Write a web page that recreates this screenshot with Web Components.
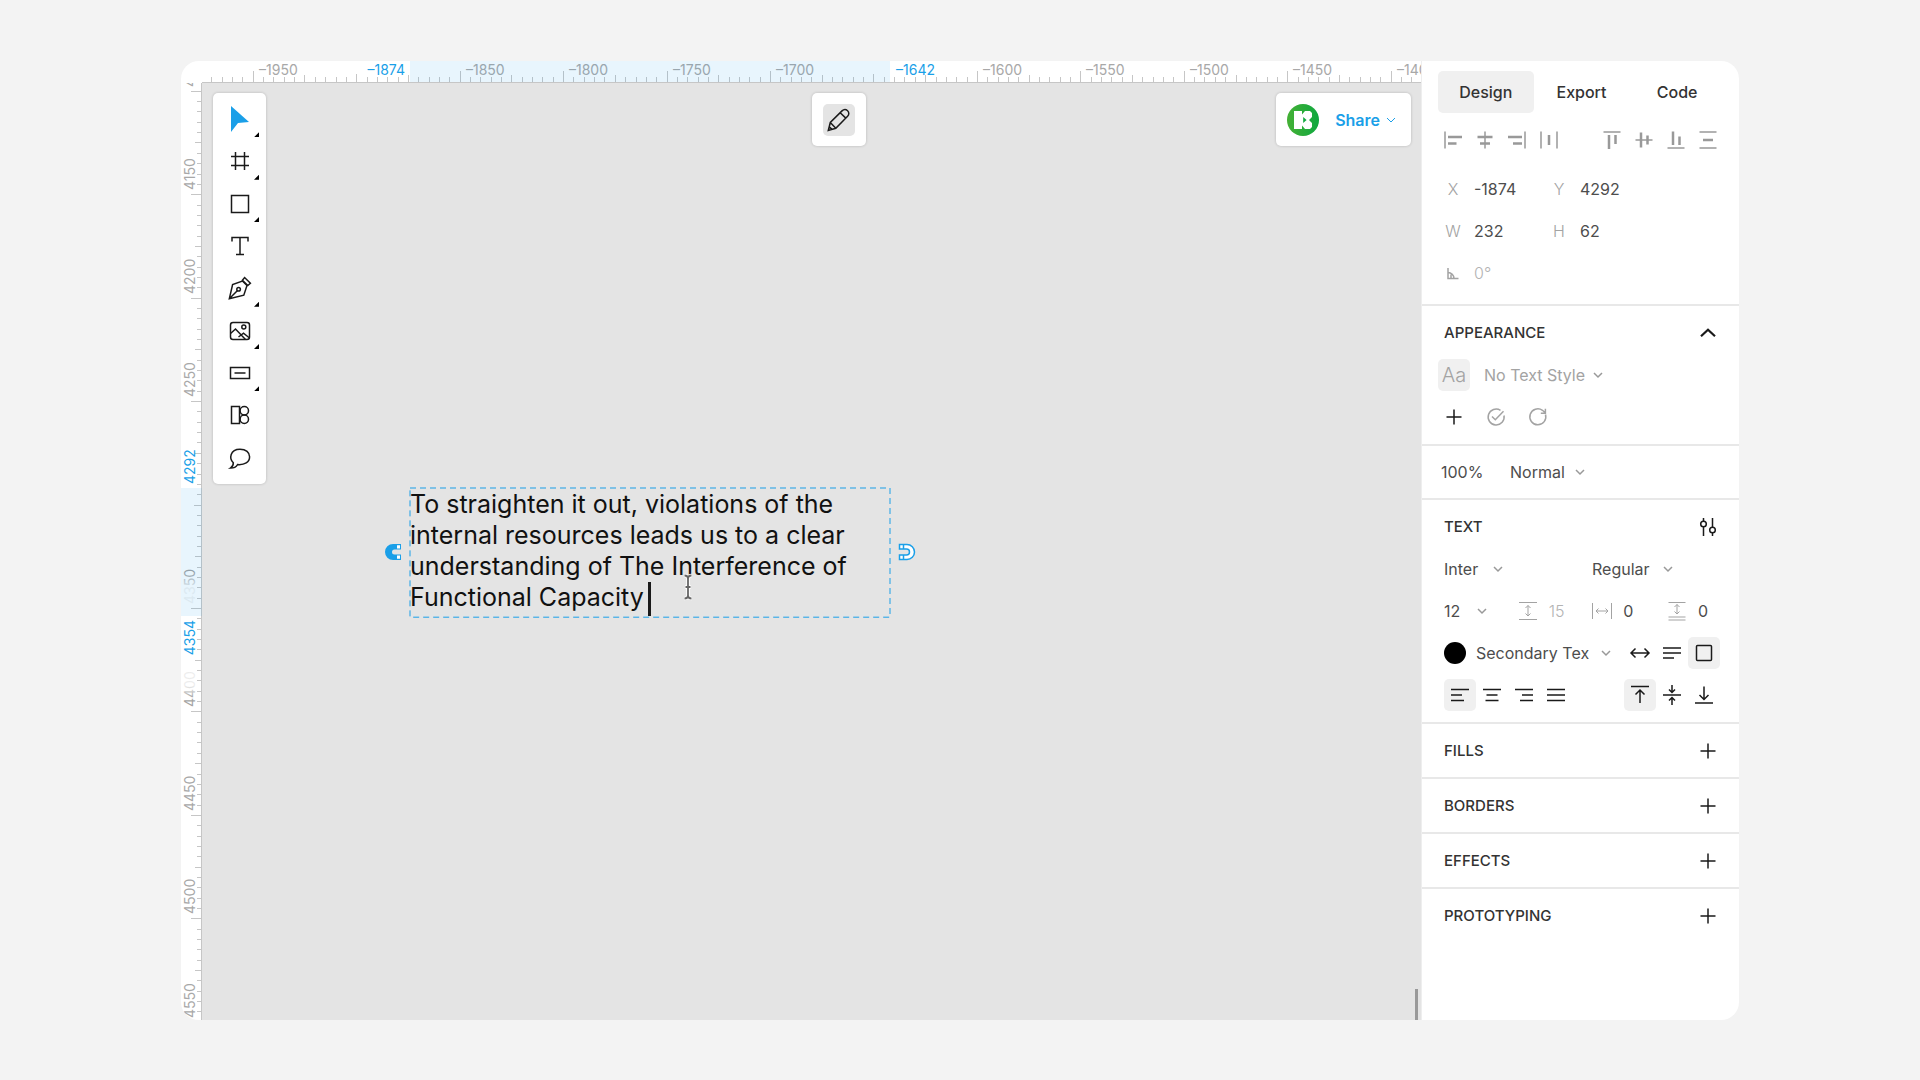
<!DOCTYPE html>
<html lang="en">
<head>
<meta charset="utf-8">
<title>Design editor</title>
<style>
  html, body { margin: 0; height: 100%; }
  body {
    background: #f3f3f3;
    font-family: Inter, "Liberation Sans", sans-serif;
    font-size: 16px;
    color: #4d4d4d;
  }
</style>
</head>
<body>
<editor-app></editor-app>

<script>
const ICONS = {
  cursor: '<path fill="#1a9fe8" stroke="none" d="M7 3 25 19 14 20 7 29Z"/>',
  frame: '<path d="M11.500 7v18M20.500 7v18M7 11.500h18M7 20.500h18"/>',
  square: '<rect x="7.500" y="7.500" width="17" height="17"/>',
  text: '<path d="M8 11.500v-4h16v4M16 7.500v17M12 24.500h8"/>',
  pen: '<path d="M5.300 26.800 8.600 12.600 18.400 9 23 13.400 19.800 23.200ZM5.300 26.800l8.200-8.300"/><circle cx="14.600" cy="17.300" r="1.800"/><path d="M18.400 8.200 20.600 5.500 26.400 11.200 23.800 13.500Z"/>',
  image: '<rect x="6.500" y="7.500" width="19" height="17" rx="2.500"/><circle cx="19.800" cy="12" r="2"/><path d="M6.500 18.500 11.500 14l10 10.500M14.500 22l5-3.800 6 4.800"/>',
  control: '<rect x="6.500" y="10.500" width="19" height="11"/><path d="M10.500 16h11"/>',
  component: '<rect x="7.500" y="7.500" width="8" height="17"/><circle cx="20.300" cy="11.700" r="4.200"/><circle cx="20.300" cy="20.300" r="4.200"/>',
  comment: '<path d="M9.300 20.700C5 16.700 5.800 7.200 16 7.200c6 0 9.600 3.300 9.600 7.600 0 5.500-5 8.300-12 7.800-1.600 2.400-4 3.600-7.200 3.500 2-1.200 3-3.200 2.900-5.400Z"/>',
  pencil: '<path d="M5.300 26.500 7.300 18.500 19 6.900c1.700-1.600 4-1.600 5.600-.2s1.600 3.900 0 5.500L12.800 24.300ZM7.300 18.500l5.500 5.800M17.200 8.800l5.600 5.300M6.300 22.900l2.700 2.500"/>',
  chev: '<path d="M12 14l4 4 4-4"/>',
  up: '<path stroke-width="2.200" d="M9 19.300 16 12.700 23 19.300"/>',
  plus: '<path d="M16 8.500v15M8.500 16h15"/>',
  check: '<path d="M24 14.500a8 8 0 1 1-3.500-5.200M12 15.500l3.300 3.300 8.200-8.600"/>',
  refresh: '<path d="M23.500 13.500a8 8 0 1 1-3-4.200l2.700 2.500M23.400 7.800v4.500h-4.600"/>',
  sliders: '<path d="M11.500 7v3.200M11.500 15.800V25M20.500 7v9.200M20.500 21.800V25"/><circle cx="11.500" cy="13" r="2.800"/><circle cx="20.500" cy="19" r="2.800"/>',
  angle: '<path stroke-width="1.500" d="M11 11v10.500h10.500M11 15.500a6 6 0 0 1 6 6M14 17.500v4"/>',
  alL: '<path d="M8 7.500v17"/><path class="b" d="M11 13h14M11 19.500h8.500"/>',
  alC: '<path d="M16 7.500v17"/><path class="b" d="M8.500 13h15M11 19.500h10"/>',
  alR: '<path d="M24 7.500v17"/><path class="b" d="M7 13h14M12 19.500h9"/>',
  alD: '<path d="M8 7.500v17M24 7.500v17"/><path class="b" d="M16 11v10"/>',
  alT: '<path d="M7.500 8h17"/><path class="b" d="M13 11v14M19.500 11v9"/>',
  alM: '<path d="M7.500 16h17"/><path class="b" d="M13 8.500v15M19.500 11.500v9"/>',
  alB: '<path d="M7.500 24h17"/><path class="b" d="M13 7.500V21M19.500 12.500V21"/>',
  alV: '<path d="M7.500 8h17M7.500 24h17"/><path class="b" d="M11 16h10"/>',
  lineH: '<path d="M7 7.500h18M7 24.500h18M16 10.500v10.500M13.500 13l2.500-2.500 2.500 2.500M13.500 18.500 16 21l2.500-2.500"/>',
  letterS: '<path d="M6.500 8v16M25.500 8v16M10 16h12M12.500 13.500 10 16l2.500 2.500M19.500 13.500 22 16l-2.500 2.500"/>',
  paraS: '<path d="M7.500 7.500h17M7.500 22h17M7.500 25h17M16 9.500v9.500M13.500 12 16 9.500l2.500 2.500M13.500 16.500 16 19l2.500-2.500"/>',
  autoW: '<path d="M7 16h18M11.500 11.500 7 16l4.500 4.500M20.500 11.500 25 16l-4.500 4.500"/>',
  autoH: '<path d="M7 11h18M7 16h18M7 21h11"/>',
  fixed: '<rect x="8.500" y="8.500" width="15" height="15" rx="1"/>',
  txL: '<path d="M7 10.500h18M7 16h11M7 21.500h13"/>',
  txC: '<path d="M7 10.500h18M10.500 16h11M9.500 21.500h13"/>',
  txR: '<path d="M7 10.500h18M14 16h11M12 21.500h13"/>',
  txJ: '<path d="M7 10.500h18M7 16h18M7 21.500h18"/>',
  vT: '<path d="M7 7.500h18M16 24V11.500M11.500 15.500l4.500-4.500 4.500 4.500"/>',
  vM: '<path d="M7 16h18M16 6v7M13 10.500l3 3 3-3M16 26v-7M13 21.500l3-3 3 3"/>',
  vB: '<path d="M7 24h18M16 7.500V20M11.500 16l4.500 4.500L20.500 16"/>',
  magnetOn: '<path fill="#1a9fe8" stroke="none" d="M24 8v5.500h-6.500a2.500 2.500 0 0 0 0 5H24V24h-8a8 8 0 0 1 0-16Z"/><path fill="#fff" stroke="none" d="M20 9.200h3v3.200h-3zM20 19.600h3v3.200h-3z"/>',
  magnetOff: '<path fill="#fff" stroke="#1a9fe8" d="M8.500 8.500h7.500a7.500 7.500 0 0 1 0 15H8.500v-4.500h7a3 3 0 0 0 0-6h-7ZM12.500 8.500v4.500M12.500 19v4.500"/>',
  ibeam: '<path stroke="#fff" stroke-width="3.500" d="M12 4.500q4 0 4 3v17q0 3-4 3M20 4.500q-4 0-4 3M16 24.500q0 3 4 3M13 16h6"/><path stroke="#666" stroke-width="1.800" d="M12.500 4.500q3.500 0 3.500 3v17q0 3-3.500 3M19.500 4.500q-3.500 0-3.500 3M16 24.500q0 3 3.500 3M13.500 16h5"/>',
  logo: '<defs><linearGradient id="g"><stop stop-color="#45b035"/><stop offset="1" stop-color="#0fa83f"/></linearGradient></defs><circle cx="16" cy="16" r="16" fill="url(#g)" stroke="none"/><path fill="#fff" stroke="none" d="M7 7h8v3.500L18 7h5l2 2v4l-3 3 3 3v4l-2 2h-5l-3-3.500V25H7Z"/><path fill="#12a83e" stroke="none" d="M16.200 13v6l3.400-3Z"/>'
};

/* Registers an element; the copy is filled in before it enters the shadow root */
const define = (name, html, setup) => {
  const template = document.createElement('template');
  template.innerHTML = html;
  customElements.define(name, class extends HTMLElement {
    connectedCallback() {
      if (this.shadowRoot) return;
      const root = this.attachShadow({ mode: 'open' });
      const copy = template.content.cloneNode(true);
      if (setup) setup(this, copy);
      root.append(copy);
    }
  });
};

/* An icon drawn on a 32px grid in the current colour */
define('ui-icon', `
  <style>
    :host { display: block; flex: none; width: 32px; height: 32px; }
    svg { display: block; fill: none; stroke: currentColor; stroke-width: var(--stroke, 1.500); }
    .b { stroke-width: 2.500; }
  </style>
  <svg width="32" height="32" viewBox="0 0 32 32" aria-hidden="true"></svg>`,
  (el, root) => { root.querySelector('svg').innerHTML = ICONS[el.getAttribute('name')]; });

define('icon-button', `
  <style>
    :host { display: block; flex: none; color: #1a1a1a; }
    button { display: block; padding: 0; border: 0; border-radius: 5px; background: none; color: inherit; }
    :host([active]) button { background: #f0f0f0; }
  </style>
  <button type="button"><ui-icon></ui-icon></button>`,
  (el, root) => {
    root.querySelector('ui-icon').setAttribute('name', el.getAttribute('name'));
    root.querySelector('button').setAttribute('aria-label', el.getAttribute('label') || el.getAttribute('name'));
  });

define('tool-button', `
  <style>
    :host { display: block; color: #1a1a1a; }
    button { position: relative; display: grid; place-items: center; width: 100%; height: 100%; padding: 0; border: 0; background: none; color: inherit; }
    :host([menu]) button::after {
      content: ""; position: absolute; right: 2px; bottom: 3px; width: 5px; height: 5px;
      background: #000; clip-path: polygon(100% 0, 100% 100%, 0 100%);
    }
  </style>
  <button type="button"><ui-icon></ui-icon></button>`,
  (el, root) => {
    root.querySelector('ui-icon').setAttribute('name', el.getAttribute('name'));
    root.querySelector('button').setAttribute('aria-label', el.getAttribute('name'));
  });

define('tool-bar', `
  <style>
    :host { display: grid; grid-auto-rows: 1fr; box-sizing: border-box; width: 53px; height: 391px; padding: 5px; background: #fff; border-radius: 5px; box-shadow: 0 0 3px #0003; }
  </style>
  <tool-button name="cursor" menu></tool-button>
  <tool-button name="frame" menu></tool-button>
  <tool-button name="square" menu></tool-button>
  <tool-button name="text"></tool-button>
  <tool-button name="pen" menu></tool-button>
  <tool-button name="image" menu></tool-button>
  <tool-button name="control" menu></tool-button>
  <tool-button name="component"></tool-button>
  <tool-button name="comment"></tool-button>`);

define('floating-card', `
  <style>
    :host { display: flex; align-items: center; box-sizing: border-box; height: 53px; padding: 0 11px; background: #fff; border-radius: 5px; box-shadow: 0 0 3px #0003; }
  </style>
  <slot></slot>`);

define('share-menu', `
  <style>
    :host { display: flex; align-items: center; gap: 16px; color: #1a9fe8; }
    button { display: flex; align-items: center; padding: 0; border: 0; background: none; color: inherit; font: 600 16px/20px Inter, sans-serif; }
    button ui-icon { margin: 0 -7px 0 -5px; --stroke: 1; }
  </style>
  <ui-icon name="logo"></ui-icon>
  <button type="button">Share<ui-icon name="chev"></ui-icon></button>`);

/* Ruler: ticks every 5 units, longer at 25 and 50, with the selection marked */
define('ruler-bar', `
  <style>
    :host { display: block; overflow: hidden; background: #fff; min-width: 0; min-height: 0; }
    svg { display: block; width: 100%; height: 100%; }
    text { font: 14px/16px Inter, sans-serif; fill: #a8a8a8; }
    .on { fill: #1a9fe8; }
    path { stroke: #c6c6c6; fill: none; shape-rendering: crispEdges; }
    .band { fill: #1a9fe8; fill-opacity: .1; }
  </style>
  <svg>
    <defs>
      <linearGradient id="rise"><stop offset=".45" stop-color="#a3a3a3" stop-opacity=".15"/><stop offset=".9" stop-color="#a3a3a3"/></linearGradient>
      <linearGradient id="fall"><stop offset=".25" stop-color="#a3a3a3"/><stop offset=".6" stop-color="#a3a3a3" stop-opacity=".2"/></linearGradient>
    </defs>
  </svg>`,
  (el, root) => {
    const n = k => Number(el.getAttribute(k));
    const vertical = el.hasAttribute('vertical');
    const from = n('from'), to = n('to'), start = n('start'), scale = 480 / 232;
    const pos = v => Math.round(start + (v - from) * scale);
    const fades = { 4350: 'rise', 4400: 'fall' };
    let ticks = '', out = '';
    const a = pos(from), b = pos(to);
    for (let v = n('min'); v <= n('max'); v += 5) {
      const p = pos(v) + 0.5;
      const near = (v - from > -30 && v - from < 10) || (!vertical && Math.abs(v - to) < 10);
      const len = v % 25 ? 5 : v % 50 ? 7 : near ? 8 : 11;
      ticks += vertical ? `M${21 - len} ${p}h${len}` : `M${p} ${21 - len}v${len}`;
      if (v % 50 === 0 && !near) {
        const label = String(v).replace('-', '–');
        const fill = fades[v] ? ` style="fill:url(#${fades[v]})"` : '';
        out += vertical
          ? `<text transform="translate(14 ${pos(v) - 4}) rotate(-90)"${fill}>${label}</text>`
          : `<text x="${pos(v) + 6}" y="14">${label}</text>`;
      }
    }
    ticks += vertical ? 'M20.5 0v2000' : 'M0 21.5h4000';
    const A = String(from).replace('-', '–'), B = String(to).replace('-', '–');
    out += vertical
      ? `<rect class="band" x="0" y="${a}" width="21" height="${b - a}"/>
         <text class="on" transform="translate(14 ${a - 4}) rotate(-90)">${A}</text>
         <text class="on" text-anchor="end" transform="translate(14 ${b + 4}) rotate(-90)">${B}</text>`
      : `<rect class="band" x="${a}" y="0" width="${b - a}" height="21"/>
         <text class="on" text-anchor="end" x="${a - 5}" y="14">${A}</text>
         <text class="on" x="${b + 6}" y="14">${B}</text>`;
    root.querySelector('svg').insertAdjacentHTML('beforeend', `<path d="${ticks}"/>${out}`);
  });

define('text-layer', `
  <style>
    :host { display: block; width: 480px; }
    .box { position: relative; padding: 1px 2px 3px 0; color: #111; font: 25px/31px Inter, sans-serif; }
    svg.edge { position: absolute; inset: 0; width: 100%; height: 100%; overflow: visible; fill: none; stroke: #1a9fe8; stroke-dasharray: 6 4; pointer-events: none; }
    .text { outline: none; }
    .caret { display: inline-block; width: 3px; height: 34px; margin: -2px 0 -2px -3px; vertical-align: middle; background: #1a1a1a; }
    .left, .right { position: absolute; top: 48px; }
    .left { left: -33px; }
    .right { right: -33px; }
    .pointer { position: absolute; left: 262px; top: 83px; }
  </style>
  <div class="box">
    <svg class="edge"><rect x="0" y="0" width="100%" height="100%"/></svg>
    <div class="text" role="textbox" aria-label="Text layer" contenteditable="true"><slot></slot> <span class="caret"></span></div>
    <ui-icon class="left" name="magnetOn"></ui-icon>
    <ui-icon class="right" name="magnetOff"></ui-icon>
    <ui-icon class="pointer" name="ibeam"></ui-icon>
  </div>`);

define('canvas-stage', `
  <style>
    :host { display: grid; grid-template: 22px 1fr / 21px 1fr; min-width: 0; }
    .corner { background: #fff; }
    .stage { position: relative; overflow: hidden; background: #e4e4e4; box-sizing: border-box; padding: 10px 10px 0 11px; }
    .bar { display: flex; align-items: flex-start; }
    .top { flex: 1; display: grid; grid-template-columns: 1fr auto 1fr; }
    .top > :last-child { justify-self: end; }
    floating-card icon-button { border-radius: 5px; background: #e4e4e4; }
    text-layer { position: absolute; left: 208px; top: 405px; }
    .thumb { position: absolute; right: 3px; bottom: 0; width: 3px; height: 31px; background: #999; }
  </style>
  <div class="corner"></div>
  <ruler-bar from="-1874" to="-1642" start="208" min="-1970" max="-1375"></ruler-bar>
  <ruler-bar vertical from="4292" to="4354" start="405" min="4100" max="4550"></ruler-bar>
  <div class="stage">
    <div class="bar">
      <tool-bar></tool-bar>
      <div class="top">
        <span></span>
        <floating-card><icon-button name="pencil" label="Edit"></icon-button></floating-card>
        <floating-card><share-menu></share-menu></floating-card>
      </div>
    </div>
    <text-layer>To straighten it out, violations of the internal resources leads us to a clear understanding of The Interference of Functional Capacity</text-layer>
    <div class="thumb"></div>
  </div>`);

/* Labelled value; the label is a letter or an icon */
define('prop-field', `
  <style>
    :host { display: flex; align-items: center; gap: 5px; }
    label { display: grid; place-items: center; width: 32px; height: 32px; flex: none; color: #a3a3a3; font-weight: 300; --stroke: 1; }
    input { min-width: 0; width: 64px; box-sizing: border-box; padding: 0; border: 0; outline: 0; background: none; color: #4d4d4d; font: 16px/20px Inter, sans-serif; }
    :host([muted]) input { color: #b3b3b3; font-weight: 300; }
    :host([small]) input { width: 22px; }
  </style>
  <label for="v"></label><input id="v" type="text">`,
  (el, root) => {
    const label = root.querySelector('label'), icon = el.getAttribute('icon');
    if (icon) { label.innerHTML = `<ui-icon name="${icon}"></ui-icon>`; label.setAttribute('aria-label', icon); }
    else label.textContent = el.getAttribute('label');
    root.querySelector('input').setAttribute('value', el.getAttribute('value'));
  });

define('pick-list', `
  <style>
    :host { display: grid; align-items: center; color: #4d4d4d; }
    select, ui-icon { grid-area: 1 / 1; }
    select { appearance: none; width: 100%; margin: 0; padding: 0 12px 0 0; border: 0; border-radius: 0; background: none; color: inherit; font: 16px/20px Inter, sans-serif; }
    ui-icon { justify-self: end; margin-right: -12px; color: #999; pointer-events: none; }
    :host([muted]) { color: #a3a3a3; }
  </style>
  <select><option></option></select><ui-icon name="chev"></ui-icon>`,
  (el, root) => {
    root.querySelector('option').textContent = el.getAttribute('value');
    root.querySelector('select').setAttribute('aria-label', el.getAttribute('label'));
  });

define('panel-section', `
  <style>
    :host { display: block; box-sizing: border-box; padding: 0 15px 0 16px; border-top: 2px solid #e8e8e8; }
    header { display: flex; align-items: center; justify-content: space-between; height: 53px; padding-left: 6px; }
    h2 { margin: 0; font-size: 15px; line-height: 20px; font-weight: 500; color: #333; }
  </style>
  <header><h2></h2><icon-button></icon-button></header>
  <slot></slot>`,
  (el, root) => {
    root.querySelector('h2').textContent = el.getAttribute('heading');
    root.querySelector('icon-button').setAttribute('name', el.getAttribute('icon') || 'plus');
  });

define('inspector-panel', `
  <style>
    :host { display: block; background: #fff; }
    nav { display: flex; padding: 10px 14px 11px 16px; }
    nav button { flex: 1; height: 42px; padding: 0; border: 0; border-radius: 5px; background: none; color: #333; font: 500 16px/20px Inter, sans-serif; }
    nav .on { background: #f0f0f0; }
    .row { display: flex; align-items: center; height: 42px; }
    .align { height: 32px; padding: 0 15px; justify-content: space-between; }
    .align div, .tight { display: flex; }
    .align icon-button { color: #999; }
    .place { display: grid; grid-template-columns: 106px 1fr; padding: 12px 15px 10px; }
    .place prop-field { height: 42px; }
    .aa { width: 32px; height: 32px; border: 0; border-radius: 5px; padding: 0; background: #f0f0f0; color: #a3a3a3; font: 300 20px/32px Inter, sans-serif; }
    .quiet { color: #a3a3a3; }
    .g10 { gap: 10px; }
    .g14 { gap: 14px; }
    .inset { padding: 0 4px 0 6px; }
    .push { margin-left: auto; }
    .looks { padding-bottom: 6px; }
    .looks .row:first-child, .type .row:first-child { margin-top: -5px; }
    .blend { display: flex; align-items: center; height: 52px; padding: 0 19px; border-top: 2px solid #e8e8e8; }
    .blend input { width: 69px; padding: 0; border: 0; background: none; color: #4d4d4d; font: 16px/20px Inter, sans-serif; }
    .swatch { width: 22px; height: 22px; padding: 0; border: 0; border-radius: 50%; background: #000; }
    .type { padding-bottom: 6px; }
    .two { justify-content: space-between; padding-right: 52px; }
    .w42 { width: 42px; margin-right: 10px; }
    .w58 { width: 58px; } .w74 { width: 74px; } .w80 { width: 80px; } .w118 { width: 118px; } .w134 { width: 134px; }
  </style>
  <nav>
    <button type="button" class="on">Design</button>
    <button type="button">Export</button>
    <button type="button">Code</button>
  </nav>
  <div class="row align">
    <div><icon-button name="alL"></icon-button><icon-button name="alC"></icon-button><icon-button name="alR"></icon-button><icon-button name="alD"></icon-button></div>
    <div><icon-button name="alT"></icon-button><icon-button name="alM"></icon-button><icon-button name="alB"></icon-button><icon-button name="alV"></icon-button></div>
  </div>
  <div class="place">
    <prop-field label="X" value="-1874"></prop-field>
    <prop-field label="Y" value="4292"></prop-field>
    <prop-field label="W" value="232"></prop-field>
    <prop-field label="H" value="62"></prop-field>
    <prop-field icon="angle" value="0°" muted></prop-field>
  </div>
  <panel-section heading="APPEARANCE" icon="up">
    <div class="looks">
      <div class="row g14"><button type="button" class="aa">Aa</button><pick-list muted class="w118" label="Text style" value="No Text Style"></pick-list></div>
      <div class="row g10"><icon-button name="plus"></icon-button><icon-button class="quiet" name="check"></icon-button><icon-button class="quiet" name="refresh"></icon-button></div>
    </div>
  </panel-section>
  <div class="blend"><input type="text" aria-label="Opacity" value="100%"><pick-list class="w74" label="Blend mode" value="Normal"></pick-list></div>
  <panel-section heading="TEXT" icon="sliders">
    <div class="type">
      <div class="row inset two"><pick-list class="w58" label="Font family" value="Inter"></pick-list><pick-list class="w80" label="Font weight" value="Regular"></pick-list></div>
      <div class="row inset">
        <pick-list class="w42" label="Font size" value="12"></pick-list>
        <prop-field class="push" small muted icon="lineH" value="15"></prop-field>
        <prop-field class="push" small icon="letterS" value="0"></prop-field>
        <prop-field class="push" small icon="paraS" value="0"></prop-field>
      </div>
      <div class="row inset g10"><button type="button" class="swatch" aria-label="Text colour"></button><pick-list class="w134" label="Colour style" value="Secondary Tex"></pick-list>
        <div class="tight push"><icon-button name="autoW"></icon-button><icon-button name="autoH"></icon-button><icon-button name="fixed" active></icon-button></div>
      </div>
      <div class="row inset">
        <div class="tight"><icon-button name="txL" active></icon-button><icon-button name="txC"></icon-button><icon-button name="txR"></icon-button><icon-button name="txJ"></icon-button></div>
        <div class="tight push"><icon-button name="vT" active></icon-button><icon-button name="vM"></icon-button><icon-button name="vB"></icon-button></div>
      </div>
    </div>
  </panel-section>
  <panel-section heading="FILLS"></panel-section>
  <panel-section heading="BORDERS"></panel-section>
  <panel-section heading="EFFECTS"></panel-section>
  <panel-section heading="PROTOTYPING"></panel-section>`);

define('editor-app', `
  <style>
    :host { display: block; box-sizing: border-box; height: 100vh; padding: 61px 181px 60px; }
    main { display: grid; grid-template-columns: 1fr 318px; height: 100%; border-radius: 18px; overflow: hidden; }
    inspector-panel { border-left: 1px solid #eee; }
  </style>
  <main><canvas-stage></canvas-stage><inspector-panel></inspector-panel></main>`);
</script>
</body>
</html>
